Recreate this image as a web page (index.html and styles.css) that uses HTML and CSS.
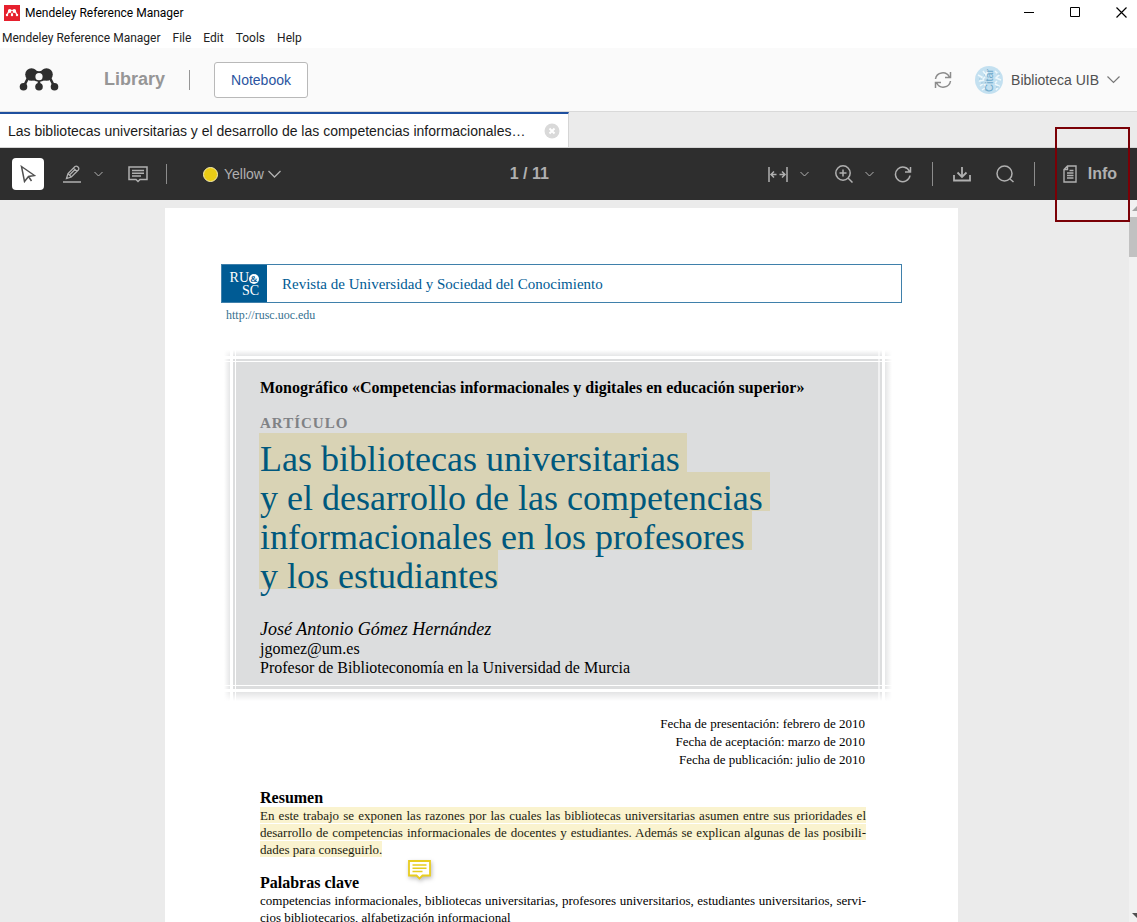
FILE: index.html
```html
<!DOCTYPE html>
<html lang="en">
<head>
    <meta charset="UTF-8">
    <meta name="viewport" content="width=device-width, initial-scale=1.0">
    <title>Mendeley Reference Manager</title>
    <link rel="stylesheet" href="styles.css">
</head>
<body>
    <div class="titlebar">
        <svg class="app-icon" width="16" height="16" viewBox="0 0 16 16">
            <rect width="16" height="16" fill="#e6202e"/>
            <g fill="#fff"><circle cx="5.8" cy="6" r="1.9"/><circle cx="10.2" cy="6" r="1.9"/><circle cx="3" cy="10" r="1.2"/><circle cx="8" cy="10" r="1.2"/><circle cx="13" cy="10" r="1.2"/></g>
            <path d="M3 10 5 6h6l2 4M8 7v3" fill="none" stroke="#fff" stroke-width="1.3"/>
            <circle cx="8" cy="7" r="1" fill="#e6202e"/>
        </svg>
        <span class="app-name">Mendeley Reference Manager</span>
        <div class="window-controls">
            <button aria-label="Minimize"><svg width="11" height="11"><path d="M0 5.500h10" stroke="#000"/></svg></button>
            <button aria-label="Maximize"><svg width="11" height="11"><path d="M.5.5h9v9h-9z" fill="none" stroke="#000"/></svg></button>
            <button aria-label="Close"><svg width="11" height="11"><path d="m.5.5 10 10m0-10-10 10" stroke="#000" stroke-width="1.200"/></svg></button>
        </div>
    </div>
    <nav class="menubar">
        <button>Mendeley Reference Manager</button>
        <button>File</button>
        <button>Edit</button>
        <button>Tools</button>
        <button>Help</button>
    </nav>

    <header class="header">
        <svg class="logo" width="40" height="24" viewBox="0 0 40 24">
            <g fill="#2e2e2e">
                <circle cx="12.500" cy="6.500" r="6.300"/><circle cx="27.500" cy="6.500" r="6.300"/>
                <path d="M14 1Q20 5.500 26 1L26 12Q20 15.500 14 12z"/>
                <circle cx="4.500" cy="18.800" r="3.800"/><circle cx="20" cy="18.800" r="3.800"/><circle cx="35.500" cy="18.800" r="3.800"/>
            </g>
            <path d="M4.500 19 9 10M35.500 19 31 10M20 12v7" stroke="#2e2e2e" stroke-width="2.600"/>
            <circle cx="20" cy="8.700" r="3.600" fill="#fafafa"/>
        </svg>
        <a class="library" href="#">Library</a>
        <button class="notebook">Notebook</button>
        <button class="sync" aria-label="Sync">
            <svg width="18" height="18" viewBox="0 0 18 18" fill="none" stroke="#8c8c8c" stroke-width="1.500">
                <path d="M1.500 8A7.300 7.300 0 0 1 15.300 6M16.500 1v5.500H11M16.500 10A7.300 7.300 0 0 1 2.700 12M1.500 17v-5.500H7"/>
            </svg>
        </button>
        <button class="account">
            <svg width="28" height="28" viewBox="0 0 28 28">
                <circle cx="14" cy="14" r="14" fill="#c3e0f0"/>
                <path d="M3 9l4 2-2 4 4-1M5 20l4-3 2 4M8 5l3 4 2-5M20 5l4 4-3 3 5 2M20 18l4 2-3 4M22 15l-2 2M10 11l-2 2M7 24l3-2" fill="none" stroke="#eef8fc" stroke-width="1.500"/>
                <path d="M4 13h3M6 17h4M9 9h1M22 8h3M21 21h3M10 24h3" stroke="#98c4dc"/>
                <text class="avatar-text" transform="translate(18 26) rotate(-90)">Citar</text>
            </svg>
            <span>Biblioteca UIB</span>
            <svg width="13" height="9" viewBox="0 0 13 9"><path d="m.500 1.500 6 6 6-6" fill="none" stroke="#777" stroke-width="1.200"/></svg>
        </button>
    </header>

    <div class="tabs">
        <div class="tab">
            <a href="#">Las bibliotecas universitarias y el desarrollo de las competencias informacionales en los profesores y los estudiantes</a>
            <button aria-label="Close tab">
                <svg width="16" height="16" viewBox="0 0 16 16"><circle cx="8" cy="8" r="7.500" fill="#d9d9d9"/><path d="m5.500 5.500 5 5m0-5-5 5" stroke="#fff" stroke-width="2"/></svg>
            </button>
        </div>
    </div>

    <div class="toolbar">
        <div class="tools">
            <button class="select-tool" aria-label="Select">
                <svg width="16" height="18" viewBox="0 0 16 18" fill="none" stroke="#505050" stroke-width="1.500"><path d="M1.500 1.500 14.500 10.500 8.500 11.500 4.500 16.500zM8.500 11.500l3 4.500"/></svg>
            </button>
            <button class="pen" aria-label="Highlight">
                <svg width="18" height="18" viewBox="0 0 18 18" fill="none" stroke="#b0b0b0" stroke-width="1.300"><path d="M3.500 13.500 5 8.500 12 1.500Q13.500.500 15 2T15.300 5L8.300 12zM5 8.500l3.300 3.500M10.500 3l3.300 3.500M7 9.500 12 4.500M0 17h18"/></svg>
            </button>
            <button class="arrow" aria-label="Highlight options"><svg width="9" height="6"><path d="m.500 1 4 4 4-4" fill="none" stroke="#b0b0b0"/></svg></button>
            <button class="note-tool" aria-label="Add note">
                <svg width="20" height="17" viewBox="0 0 20 17" fill="none" stroke="#b0b0b0" stroke-width="1.500"><path d="M1 1h18v12.500h-7l-2 2-2-2H1zM4 4.500h12M4 7.300h12M4 10h9"/></svg>
            </button>
            <span class="divider"></span>
            <button class="color"><i></i>Yellow<svg width="13" height="8"><path d="m.500 1 6 6 6-6" fill="none" stroke="#b0b0b0" stroke-width="1.300"/></svg></button>
        </div>
        <div class="page-count">1 / 11</div>
        <div class="tools right">
            <button aria-label="Fit width">
                <svg width="20" height="17" viewBox="0 0 20 17" fill="none" stroke="#b0b0b0" stroke-width="1.500"><path d="M1 1v15M19 1v15M3 8.500h5.500M17 8.500h-5.500M6 5.500l-3 3 3 3M14 5.500l3 3-3 3"/></svg>
            </button>
            <button class="arrow" aria-label="Fit options"><svg width="9" height="6"><path d="m.500 1 4 4 4-4" fill="none" stroke="#b0b0b0"/></svg></button>
            <button class="zoom" aria-label="Zoom in">
                <svg width="18" height="18" viewBox="0 0 18 18" fill="none" stroke="#b0b0b0" stroke-width="1.500"><circle cx="8" cy="8" r="7.200"/><path d="m13 13 4.500 4.500M8 4.500v7M4.500 8h7"/></svg>
            </button>
            <button class="arrow" aria-label="Zoom options"><svg width="9" height="6"><path d="m.500 1 4 4 4-4" fill="none" stroke="#b0b0b0"/></svg></button>
            <button class="rotate" aria-label="Rotate">
                <svg width="18" height="18" viewBox="0 0 18 18" fill="none" stroke="#b0b0b0" stroke-width="1.500"><path d="M15.500 6.500A7.300 7.300 0 1 0 16 10.500M16.500 2v5H11"/></svg>
            </button>
            <span class="divider tall"></span>
            <button class="download" aria-label="Download">
                <svg width="18" height="16" viewBox="0 0 18 16" fill="none" stroke="#b0b0b0" stroke-width="1.800"><path d="M1 9v5.500h16V9M9 1v9.500M4.500 6.500 9 11l4.500-4.500"/></svg>
            </button>
            <button class="search" aria-label="Search">
                <svg width="18" height="18" viewBox="0 0 18 18" fill="none" stroke="#b0b0b0" stroke-width="1.500"><circle cx="8.500" cy="8.500" r="7.500"/><path d="m14 14 3.500 3"/></svg>
            </button>
            <span class="divider tall"></span>
        </div>
        <button class="info">
            <svg width="14" height="18" viewBox="0 0 14 18" fill="none" stroke="#b0b0b0" stroke-width="1.400"><path d="M4.500 1H13v16H1V4.500zM4.500 1v3.500H1M4 8h6.500M4 10.500h6.500M4 13h6.500M6.500 5.500h4"/></svg>
            Info
        </button>
        <div class="info-outline"></div>
    </div>

    <main class="viewer">
        <div class="canvas">
            <article class="page">
                <div class="journal">
                    <div class="journal-logo"><span>RU<b>&amp;</b></span><span>SC</span></div>
                    <div class="journal-name">Revista de Universidad y Sociedad del Conocimiento</div>
                </div>
                <a class="journal-url" href="#">http://rusc.uoc.edu</a>

                <section class="cover">
                    <p class="monograph">Monográfico «Competencias informacionales y digitales en educación superior»</p>
                    <p class="kind">ARTÍCULO</p>
                    <h1>
                        <mark>Las bibliotecas universitarias</mark>
                        <mark>y el desarrollo de las competencias</mark>
                        <mark>informacionales en los profesores</mark>
                        <mark class="last">y los estudiantes</mark>
                    </h1>
                    <p class="author">José Antonio Gómez Hernández</p>
                    <p class="affiliation">jgomez@um.es<br>Profesor de Biblioteconomía en la Universidad de Murcia</p>
                </section>

                <p class="dates">Fecha de presentación: febrero de 2010<br>Fecha de aceptación: marzo de 2010<br>Fecha de publicación: julio de 2010</p>

                <section class="text">
                    <h2>Resumen</h2>
                    <p class="line full"><mark>En este trabajo se exponen las razones por las cuales las bibliotecas universitarias asumen entre sus prioridades el</mark></p>
                    <p class="line full"><mark>desarrollo de competencias informacionales de docentes y estudiantes. Además se explican algunas de las posibili-</mark></p>
                    <p class="line"><mark>dades para conseguirlo.</mark></p>
                    <button class="sticky" aria-label="Note">
                        <svg width="23" height="20" viewBox="0 0 23 20"><path d="M1 1h21v14.500h-7.500l-3 3-3-3H1z" fill="#fff" stroke="#e8cd1f" stroke-width="1.800"/><path d="M4.500 5h14M4.500 8.300h14M4.500 11.500h10" stroke="#e8cd1f" stroke-width="1.500"/></svg>
                    </button>
                    <h2>Palabras clave</h2>
                    <p class="line full">competencias informacionales, bibliotecas universitarias, profesores universitarios, estudiantes universitarios, servi-</p>
                    <p class="line">cios bibliotecarios, alfabetización informacional</p>
                </section>
            </article>
        </div>
        <div class="scrollbar"><span class="up"></span><span class="thumb"></span><span class="down"></span></div>
    </main>
</body>
</html>
```
FILE: styles.css
```css
* {
    box-sizing: border-box;
}
body {
    margin: 0;
    height: 100vh;
    display: flex;
    flex-direction: column;
    overflow: hidden;
    background: #fff;
    font-family: "Liberation Sans", Arial, sans-serif;
    font-size: 14px;
}
button {
    display: flex;
    align-items: center;
    padding: 0;
    border: 0;
    background: none;
    font: inherit;
    color: inherit;
    cursor: pointer;
}
a {
    color: inherit;
    text-decoration: none;
}
p, h1, h2 {
    margin: 0;
}
svg {
    display: block;
    flex: none;
}

/* window chrome */
.titlebar, .menubar {
    display: flex;
    align-items: center;
    flex: none;
    font-family: Roboto, "Noto Sans", sans-serif;
    font-size: 12px;
}
.titlebar {
    height: 25px;
    padding-left: 4px;
    color: #000;
}
.app-name {
    margin-left: 5px;
}
.window-controls {
    display: flex;
    gap: 35px;
    margin-left: auto;
    padding-right: 10px;
}
.menubar {
    height: 23px;
    gap: 12px;
    padding: 2px 0 0 2px;
    color: #222;
}

/* app header */
.header {
    display: flex;
    align-items: center;
    flex: none;
    height: 64px;
    padding: 0 17px 0 19px;
    background: #fafafa;
    border-bottom: 1px solid #d9d9d9;
}
.library {
    margin: 0 24px 0 45px;
    font-size: 18px;
    font-weight: bold;
    color: #969696;
}
.notebook {
    position: relative;
    height: 36px;
    margin-left: 25px;
    padding: 0 16px;
    background: #fff;
    border: 1px solid #b9b9b9;
    border-radius: 3px;
    color: #2a54a0;
}
.notebook::before {
    content: "";
    position: absolute;
    left: -26px;
    top: 7px;
    width: 1px;
    height: 20px;
    background: #969696;
}
.sync {
    margin-left: auto;
}
.account {
    margin-left: 23px;
    gap: 8px;
    color: #505050;
}
.avatar-text {
    font-size: 11px;
    fill: #6fa9cb;
}

/* tabs */
.tabs {
    display: flex;
    flex: none;
    height: 36px;
    background: #ebebeb;
    border-bottom: 1px solid #d5d5d5;
}
.tab {
    display: flex;
    align-items: center;
    width: 50%;
    padding: 0 8px;
    background: #fff;
    border-top: 2px solid #1f509f;
    border-right: 1px solid #d5d5d5;
}
.tab a {
    flex: 1;
    min-width: 0;
    margin-right: 16px;
    overflow: hidden;
    text-overflow: ellipsis;
    white-space: nowrap;
    color: #1a1a1a;
}

/* pdf toolbar */
.toolbar {
    position: relative;
    display: flex;
    align-items: center;
    flex: none;
    height: 52px;
    padding: 0 20px 0 12px;
    background: #2e2e2e;
    color: #b0b0b0;
}
.tools {
    display: flex;
    align-items: center;
    flex: 1;
}
.right {
    justify-content: flex-end;
    margin-right: 11px;
}
.select-tool {
    justify-content: center;
    width: 32px;
    height: 32px;
    background: #fff;
    border-radius: 4px;
}
.pen {
    margin-left: 19px;
}
.arrow {
    margin-left: 13px;
}
.note-tool {
    margin-left: 25px;
}
.divider {
    width: 1px;
    height: 20px;
    margin-left: 18px;
    background: #8c8c8c;
}
.tall {
    height: 24px;
}
.color {
    margin-left: 36px;
}
.color i {
    width: 15px;
    height: 15px;
    margin-right: 6px;
    background: #e9cb16;
    border: 1px solid #f7edb0;
    border-radius: 50%;
}
.color svg {
    margin-left: 4px;
}
.page-count {
    margin-left: 12px;
    font-size: 16px;
    font-weight: bold;
}
.right .arrow {
    margin-left: 12px;
}
.zoom {
    margin-left: 26px;
}
.rotate, .download {
    margin-left: 20px;
}
.search {
    margin-left: 25px;
}
.right .divider {
    margin-left: 20px;
}
.info {
    margin-left: 17px;
    gap: 11px;
    font-size: 16px;
    font-weight: bold;
}
.info-outline {
    position: absolute;
    z-index: 2;
    top: -21px;
    right: 7px;
    width: 75px;
    height: 95px;
    border: 2px solid #7a0006;
    pointer-events: none;
}

/* document */
.viewer {
    display: flex;
    flex: 1;
    min-height: 0;
    background: #ebebeb;
}
.canvas {
    flex: 1;
    padding: 8px 6px 0 0;
    overflow: hidden;
}
.page {
    max-width: 793px;
    min-height: 1122px;
    margin: 0 auto;
    padding: 56px 56px 0;
    background: #fff;
    font-family: "Liberation Serif", "Times New Roman", serif;
    font-size: 13px;
    line-height: 18px;
    color: #000;
}
.journal {
    display: flex;
    height: 39px;
    border: 1px solid #3f80ab;
    color: #005b94;
}
.journal-logo {
    display: flex;
    flex-direction: column;
    align-items: flex-end;
    width: 45px;
    padding: 6px 8px 0 0;
    background: #005b94;
    color: #fff;
    font-size: 14px;
    line-height: 13px;
}
.journal-logo b {
    display: inline-block;
    width: 10px;
    height: 10px;
    border-radius: 50%;
    background: #fff;
    color: #005b94;
    font-size: 9px;
    line-height: 10px;
    text-align: center;
}
.journal-name {
    padding-left: 15px;
    font-size: 15px;
    line-height: 38px;
}
.journal-url {
    display: block;
    margin: 3px 0 0 5px;
    font-size: 12px;
    color: #35708f;
}
.cover {
    height: 351px;
    margin: 26px 10px 0 3px;
    padding: 28px 36px 0;
    /* crossing white rules with faded outer edges */
    background:
        linear-gradient(to right, #fff, #fff4 6px, #fff 6px 9px, #fff0 9px 11px, #fff 11px 12px, #fff0 12px calc(100% - 14px), #fff9 calc(100% - 14px) calc(100% - 12px), #fff0 calc(100% - 12px) calc(100% - 10px), #fff calc(100% - 10px) calc(100% - 7px), #fff4 calc(100% - 7px), #fff),
        linear-gradient(#fff, #fff4 6px, #fff 6px 9px, #fff0 9px 11px, #fff 11px 12px, #fff0 12px calc(100% - 16px), #fff calc(100% - 16px) calc(100% - 15px), #fff0 calc(100% - 15px) calc(100% - 12px), #fff calc(100% - 12px) calc(100% - 9px), #fff3 calc(100% - 9px), #fff),
        #dcddde;
}
.monograph {
    font-size: 16px;
    font-weight: bold;
    line-height: 20px;
}
.kind {
    margin-top: 16px;
    font-size: 15px;
    font-weight: bold;
    letter-spacing: 1px;
    color: #808285;
}
h1 {
    margin: 1px 0 0 -1px;
    font-size: 36px;
    font-weight: normal;
}
h1 mark {
    display: block;
    width: fit-content;
    padding: 14px 7px 1px 1px;
    background: #d9d3b5;
    line-height: 24px;
    color: #00587d;
    white-space: nowrap;
}
h1 .last {
    padding-right: 0;
}
.author {
    margin-top: 30px;
    font-size: 18px;
    font-style: italic;
    line-height: 20px;
}
.affiliation {
    font-size: 16px;
    line-height: 19px;
}
.dates {
    margin: 14px 37px 0 0;
    text-align: right;
}
.text {
    position: relative;
    margin: 20px 36px 0 39px;
}
h2 {
    font-size: 16px;
    line-height: 18px;
}
.line {
    height: 17px;
    line-height: 17px;
    white-space: nowrap;
}
.full {
    text-align-last: justify;
}
.line mark {
    display: block;
    width: fit-content;
    height: 16px;
    background: #faf3cf;
    color: #1c1c10;
}
.full mark {
    width: auto;
}
.line + h2, .sticky + h2 {
    margin-top: 16px;
}
.sticky {
    position: absolute;
    left: 148px;
    top: 71px;
    filter: drop-shadow(1px 2px 2px #0004);
}
.scrollbar {
    display: flex;
    flex-direction: column;
    align-items: flex-end;
    width: 8px;
    padding: 6px 0 4px;
    background: #f1f1f1;
    overflow: hidden;
}
.scrollbar .up, .scrollbar .down {
    border: 5px solid transparent;
    border-right-width: 0;
}
.up {
    border-top: 0 !important;
    border-bottom: 5px solid #a3a3a3 !important;
}
.thumb {
    width: 8px;
    height: 40px;
    margin-top: 6px;
    background: #c1c1c1;
}
.down {
    margin-top: auto;
    border-bottom: 0 !important;
    border-top: 5px solid #505050 !important;
}
```
